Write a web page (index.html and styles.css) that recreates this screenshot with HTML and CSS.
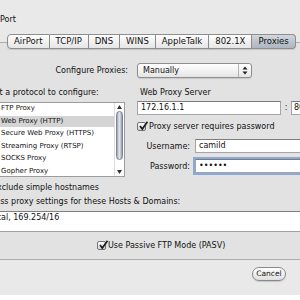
FILE: index.html
```html
<!DOCTYPE html>
<html lang="en">

<head>
    <meta charset="UTF-8">
    <meta name="viewport" content="width=device-width, initial-scale=1.0">
    <title>Network - Proxies</title>
    <link rel="stylesheet" href="styles.css">
</head>

<body>

    <div class="window">
        <div class="toolbar"><span class="location">AirPort</span></div>

        <div class="tabview">
            <div class="tabs">
                <span class="tab">AirPort</span>
                <span class="tab">TCP/IP</span>
                <span class="tab">DNS</span>
                <span class="tab">WINS</span>
                <span class="tab">AppleTalk</span>
                <span class="tab">802.1X</span>
                <span class="tab selected">Proxies</span>
            </div>

            <div class="tabbox">
                <div class="configure">
                    <span class="configure-label">Configure Proxies:</span>
                    <div class="popup">
                        <span class="popup-value">Manually</span>
                        <span class="popup-arrows">
                            <svg width="6" height="9" viewBox="0 0 6 9"><path d="M3 0.5 L5.5 3.5 H0.5 Z M3 8.5 L5.5 5.5 H0.5 Z" fill="#222"/></svg>
                        </span>
                    </div>
                </div>

                <div class="panes">
                    <!-- Protocol list -->
                    <div class="protocols">
                        <div class="heading">Select a protocol to configure:</div>
                        <div class="list">
                            <div class="rows">
                                <div class="row"><span class="checkbox small"></span>FTP Proxy</div>
                                <div class="row selected"><span class="checkbox small"><svg class="tick" viewBox="0 0 10 10"><path d="M2 5 L4.3 8 L9.5 0.8" /></svg></span>Web Proxy (HTTP)</div>
                                <div class="row"><span class="checkbox small"></span>Secure Web Proxy (HTTPS)</div>
                                <div class="row"><span class="checkbox small"></span>Streaming Proxy (RTSP)</div>
                                <div class="row"><span class="checkbox small"></span>SOCKS Proxy</div>
                                <div class="row"><span class="checkbox small"></span>Gopher Proxy</div>
                            </div>
                            <div class="scrollbar">
                                <span class="arrow">
                                    <svg width="5" height="4" viewBox="0 0 5 4"><path d="M2.5 0 L5 4 H0 Z" fill="#333"/></svg>
                                </span>
                                <span class="thumb"></span>
                                <span class="track"></span>
                                <span class="arrow">
                                    <svg width="5" height="4" viewBox="0 0 5 4"><path d="M2.5 4 L5 0 H0 Z" fill="#333"/></svg>
                                </span>
                            </div>
                        </div>
                    </div>

                    <!-- Server settings -->
                    <div class="server">
                        <div class="heading">Web Proxy Server</div>
                        <div class="address-row">
                            <div class="field address">172.16.1.1</div>
                            <span class="colon">:</span>
                            <div class="field port">80</div>
                        </div>
                        <div class="check-row">
                            <span class="checkbox"><svg class="tick" viewBox="0 0 10 10"><path d="M2 5 L4.3 8 L9.5 0.8" /></svg></span>
                            Proxy server requires password
                        </div>
                        <div class="login-row">
                            <span class="login-label">Username:</span>
                            <div class="field">camild</div>
                        </div>
                        <div class="login-row">
                            <span class="login-label">Password:</span>
                            <div class="field focused">&bull;&bull;&bull;&bull;&bull;&bull;</div>
                        </div>
                    </div>
                </div>

                <div class="check-row exclude">
                    <span class="checkbox"></span>
                    Exclude simple hostnames
                </div>
                <div class="heading bypass">Bypass proxy settings for these Hosts &amp; Domains:</div>
                <div class="textarea">*.local, 169.254/16</div>

                <div class="check-row passive">
                    <span class="checkbox"><svg class="tick" viewBox="0 0 10 10"><path d="M2 5 L4.3 8 L9.5 0.8" /></svg></span>
                    Use Passive FTP Mode (PASV)
                </div>
            </div>
        </div>

        <div class="buttons">
            <span class="button">Cancel</span>
            <span class="button">OK</span>
        </div>
    </div>

</body>

</html>
```

FILE: styles.css
```css
body {
    margin: 0;
    background: #fff;
    font-family: "DejaVu Sans", sans-serif;
    font-size: 8px;
    color: #111;
    overflow: hidden;
}

.window {
    width: 380px;
    height: 295px;
    margin-left: -40px;
    background: #e9e9e9;
    box-shadow: 0 2px 4px rgba(0, 0, 0, 0.45);
    display: flex;
    flex-direction: column;
}

.toolbar {
    height: 34px;
    padding: 15px 0 0 29px;
    box-sizing: border-box;
    line-height: 10px;
}

.tabview {
    margin: 0 10px 0 11px;
}

.tabs {
    display: flex;
    height: 15px;
    margin: 0 0 -7px 36px;
    position: relative;
    z-index: 1;
}

.tab {
    padding: 0 6px;
    font-size: 8.5px;
    line-height: 13px;
    border: 1px solid #8e8e8e;
    border-left: none;
    background: linear-gradient(#ffffff, #f1f1f1 50%, #e6e6e6);
    box-shadow: 0 1px 1px rgba(0, 0, 0, 0.12);
}

.tab:first-child {
    border-left: 1px solid #8e8e8e;
    border-radius: 4px 0 0 4px;
}

.tab:last-child {
    border-radius: 0 4px 4px 0;
}

.tab.selected {
    background: linear-gradient(#d3d8df, #bcc3cd 50%, #aeb6c2);
}

.tabbox {
    border: 1px solid #acacac;
    background: #e2e2e2;
    padding: 20px 5px 8px 3px;
    height: 218px;
    box-sizing: border-box;
}

.configure {
    display: flex;
    align-items: center;
    height: 15px;
}

.configure-label {
    width: 153px;
    text-align: right;
    margin-right: 9px;
}

.popup {
    width: 115px;
    height: 15px;
    box-sizing: border-box;
    border: 1px solid #8f8f8f;
    border-radius: 3px;
    background: linear-gradient(#ffffff, #f3f3f3 50%, #e4e4e4);
    display: flex;
    align-items: center;
    box-shadow: 0 1px 1px rgba(0, 0, 0, 0.12);
}

.popup-value {
    flex: 1;
    padding-left: 5px;
}

.popup-arrows {
    width: 12px;
    height: 100%;
    border-left: 1px solid #b4b4b4;
    display: flex;
    align-items: center;
    justify-content: center;
}

.panes {
    display: flex;
    margin-top: 10px;
    gap: 12px;
}

.heading {
    line-height: 10px;
    padding-left: 3px;
}

.protocols {
    width: 150px;
}

.list {
    margin-top: 4px;
    height: 75px;
    box-sizing: border-box;
    border: 1px solid #9c9c9c;
    background: #fff;
    display: flex;
}

.rows {
    flex: 1;
}

.row {
    height: 11px;
    margin-bottom: 1.6px;
    line-height: 11px;
    font-size: 7px;
    display: flex;
    align-items: center;
    padding-left: 25px;
    position: relative;
}

.row .checkbox {
    position: absolute;
    left: 12px;
    top: 2px;
}

.row.selected {
    background: #d4d4d4;
}

.scrollbar {
    width: 9px;
    display: flex;
    flex-direction: column;
    align-items: center;
    border-left: 1px solid #dcdcdc;
}

.arrow {
    height: 8px;
    display: flex;
    align-items: center;
}

.thumb {
    width: 7px;
    height: 49px;
    box-sizing: border-box;
    border: 1px solid #7d8591;
    border-radius: 4px;
    background: linear-gradient(to right, #9aa3af, #e4e8ee 45%, #c3cad3 70%, #8d96a3);
}

.track {
    flex: 1;
}

.server {
    flex: 1;
}

.address-row {
    display: flex;
    margin-top: 3px;
    height: 14px;
}

.field {
    height: 14px;
    box-sizing: border-box;
    border: 1px solid #a5a5a5;
    border-top-color: #7c7c7c;
    background: #fff;
    padding-left: 3px;
    line-height: 12px;
    flex: 1;
}

.field.address {
    flex: none;
    width: 144px;
}

.field.port {
    padding-left: 2px;
}

.colon {
    width: 10px;
    text-align: center;
    line-height: 14px;
}

.field.focused {
    box-shadow: 0 0 0 2px rgba(105, 150, 215, 0.75);
}

.check-row {
    display: flex;
    align-items: center;
    gap: 3px;
    height: 13px;
    margin-top: 5px;
}

.checkbox {
    width: 9px;
    height: 9px;
    box-sizing: border-box;
    border: 1px solid #727272;
    border-radius: 2px;
    background: linear-gradient(#fdfdfd, #d6d6d6);
    position: relative;
    flex: none;
}

.checkbox.small {
    width: 8px;
    height: 8px;
}

.tick {
    position: absolute;
    left: 0;
    top: -2px;
    width: 10px;
    height: 10px;
    fill: none;
    stroke: #1c1c1c;
    stroke-width: 1.7;
}

.login-row {
    display: flex;
    align-items: center;
    margin-top: 6px;
}

.login-label {
    width: 53px;
    text-align: right;
    margin-right: 5px;
}

.exclude {
    height: 10px;
    margin: 5px 0 0 5px;
}

.bypass {
    margin-top: 5px;
    padding-left: 5px;
}

.textarea {
    margin: 4px 0 0 2px;
    height: 21px;
    box-sizing: border-box;
    border: 1px solid #a0a0a0;
    border-top-color: #808080;
    background: #fff;
    padding: 1px 0 0 5px;
    line-height: 10px;
}

.passive {
    height: 12px;
    margin-top: 7px;
    padding-left: 122px;
    gap: 2px;
}

.buttons {
    display: flex;
    justify-content: flex-end;
    gap: 15px;
    padding: 7px 5px 0 0;
}

.button {
    width: 34px;
    height: 14px;
    box-sizing: border-box;
    border: 1px solid #8a8a8a;
    border-radius: 7px;
    background: linear-gradient(#ffffff, #f0f0f0 50%, #e0e0e0);
    text-align: center;
    font-size: 7.5px;
    line-height: 12px;
    box-shadow: 0 1px 1px rgba(0, 0, 0, 0.15);
}
```
